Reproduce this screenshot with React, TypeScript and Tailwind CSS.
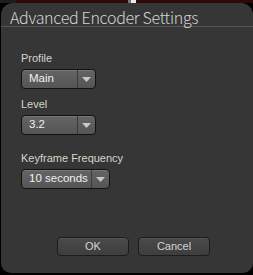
import React from 'react';

const Select: React.FC<{ value: string; width: string }> = ({ value, width }) => (
  <div
    className={`flex h-[20px] ${width} items-stretch rounded-[4px] border border-[#111] bg-gradient-to-b from-[#646464] to-[#555] shadow-[inset_0_1px_0_#777]`}
  >
    <span className="flex flex-1 items-center whitespace-nowrap pl-[7px] text-[11.5px] leading-none text-[#f0f0f0]">{value}</span>
    <span className="w-px bg-[#3a3a3a]" />
    <span className="flex w-[17px] items-center justify-center">
      <svg width="9" height="5" viewBox="0 0 9 5">
        <path d="M0 0 H9 L4.5 5 Z" fill="#c8c8c8" />
      </svg>
    </span>
  </div>
);

const Field: React.FC<{ label: string; children: React.ReactNode }> = ({ label, children }) => (
  <div className="flex flex-col gap-[3px]">
    <span className="whitespace-nowrap text-[11px] leading-[15px] text-[#d8d4ca]">{label}</span>
    {children}
  </div>
);

const Button: React.FC<{ label: string }> = ({ label }) => (
  <button className="flex h-[19px] w-[72px] items-center justify-center rounded-[4px] border border-[#1c1c1c] bg-gradient-to-b from-[#4a4a4a] to-[#3e3e3e] text-[11px] text-[#d4d4d4] shadow-[inset_0_1px_0_#555]">
    {label}
  </button>
);

export default function App() {
  return (
    <div className="h-[275px] w-[253px] overflow-hidden bg-black" style={{ fontFamily: '"Liberation Sans", Arial, sans-serif' }}>
      <div className="flex h-[3px]">
        <div className="w-[16px] bg-[#1e1e1e]" />
        <div className="w-[112px] bg-[#2e0909]" />
        <div className="w-[3px] bg-[#777]" />
        <div className="w-[5px] bg-[#e8e8e8]" />
        <div className="flex-1 bg-[#2e0909]" />
      </div>
      <div className="ml-px flex h-[270px] flex-col rounded-t-[12px] rounded-b-[10px] bg-[#363636]">
        <div className="flex h-[24px] items-end border-b border-[#555] pl-[9px]">
          <span className="whitespace-nowrap text-[16px] leading-[17px] tracking-[-0.3px] text-[#d4d4d4]" style={{ fontFamily: '"Noto Sans CJK JP", "DejaVu Sans", sans-serif', fontWeight: 300 }}>
            Advanced Encoder Settings
          </span>
        </div>
        <div className="flex flex-col gap-[8px] pl-[20px] pt-[24px]">
          <Field label="Profile">
            <Select value="Main" width="w-[75px]" />
          </Field>
          <Field label="Level">
            <Select value="3.2" width="w-[75px]" />
          </Field>
          <div className="mt-[8px]">
            <Field label="Keyframe Frequency">
              <Select value="10 seconds" width="w-[89px]" />
            </Field>
          </div>
        </div>
        <div className="mt-auto mb-[17px] ml-[56px] flex gap-[9px]">
          <Button label="OK" />
          <Button label="Cancel" />
        </div>
      </div>
    </div>
  );
}
